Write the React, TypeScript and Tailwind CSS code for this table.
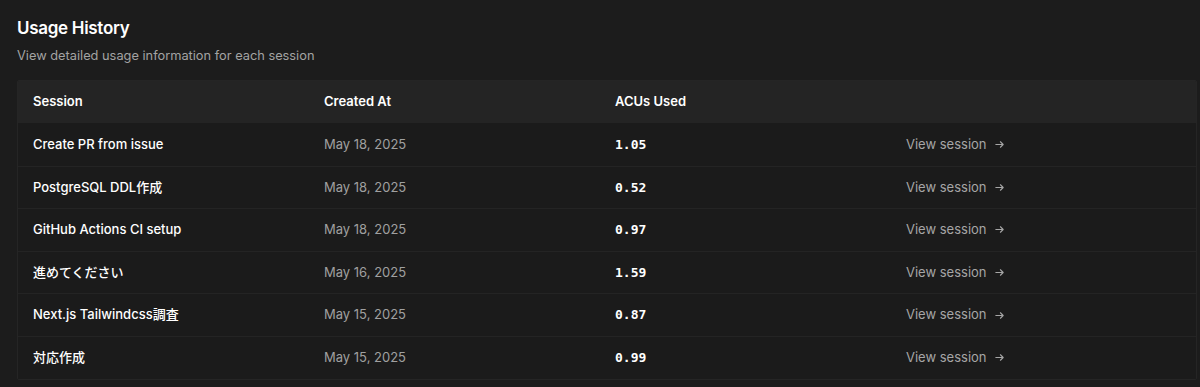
import React from "react";

const rows = [
  { name: "Create PR from issue", date: "May 18, 2025", acu: "1.05" },
  { name: "PostgreSQL DDL作成", date: "May 18, 2025", acu: "0.52" },
  { name: "GitHub Actions CI setup", date: "May 18, 2025", acu: "0.97" },
  { name: "進めてください", date: "May 16, 2025", acu: "1.59" },
  { name: "Next.js Tailwindcss調査", date: "May 15, 2025", acu: "0.87" },
  { name: "対応作成", date: "May 15, 2025", acu: "0.99" },
];

function Arrow() {
  return (
    <svg width="11" height="11" viewBox="0 0 12 12" fill="none" stroke="currentColor" strokeWidth="1.2" strokeLinecap="round" strokeLinejoin="round">
      <path d="M2 6h8M7 3l3 3-3 3" />
    </svg>
  );
}

export default function App() {
  return (
    <div
      className="w-[1200px] h-[387px] bg-[#1c1c1c] text-white overflow-hidden"
      style={{ fontFamily: 'Inter, "Noto Sans CJK JP", sans-serif' }}
    >
      <div className="pl-[17px] pr-[3px] pt-[17px]">
        <h2 className="text-[17px] font-semibold leading-[22px] tracking-[-0.3px]">Usage History</h2>
        <p className="mt-[8px] text-[12.8px] leading-[18px] text-[#a3a3a3]">
          View detailed usage information for each session
        </p>
        <div className="mt-[15px] border border-[#252525] rounded-[2px] overflow-hidden">
          <div className="grid grid-cols-[291px_291px_291px_1fr] h-[42px] items-center bg-[#242424] px-[15px] text-[13px] font-semibold">
            <div>Session</div>
            <div>Created At</div>
            <div>ACUs Used</div>
            <div></div>
          </div>
          {rows.map((r, i) => (
            <div
              key={i}
              className={`grid grid-cols-[291px_291px_291px_1fr] h-[42.6px] items-center bg-[#1b1b1b] px-[15px] text-[13px] ${i > 0 ? "border-t border-[#242424]" : ""}`}
            >
              <div className="font-medium text-white">{r.name}</div>
              <div className="text-[#a0a0a0]">{r.date}</div>
              <div className="font-bold text-[13px]" style={{ fontFamily: '"DejaVu Sans Mono", monospace' }}>{r.acu}</div>
              <div className="flex items-center gap-[7px] text-[#a6a6a6]">
                <span>View session</span>
                <Arrow />
              </div>
            </div>
          ))}
        </div>
      </div>
    </div>
  );
}
